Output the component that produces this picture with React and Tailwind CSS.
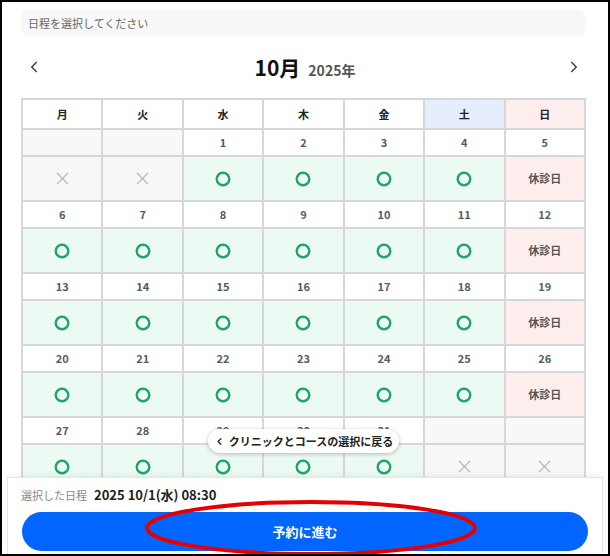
import React from "react";
import { ChevronLeft, ChevronRight } from "lucide-react";

const Circle = () => (
  <svg width="16" height="16" viewBox="0 0 16 16">
    <circle cx="8" cy="8" r="6.3" fill="none" stroke="#1fa56a" strokeWidth="2.4" />
  </svg>
);

const Cross = () => (
  <svg width="13" height="13" viewBox="0 0 13 13">
    <path d="M1 1 L12 12 M12 1 L1 12" stroke="#b9b9be" strokeWidth="1.3" />
  </svg>
);

const weeks = [
  [null, null, 1, 2, 3, 4, 5],
  [6, 7, 8, 9, 10, 11, 12],
  [13, 14, 15, 16, 17, 18, 19],
  [20, 21, 22, 23, 24, 25, 26],
  [27, 28, 29, 30, 31, null, null],
];

const heads = ["月", "火", "水", "木", "金", "土", "日"];

export default function App() {
  return (
    <div className="w-[610px] h-[556px] border-2 border-black bg-white relative overflow-hidden font-['Noto_Sans_CJK_JP',sans-serif]">
      <div className="ml-[19px] w-[565px] pt-[8px]">
        <div className="h-[26px] rounded-lg bg-[#f8f8f9] flex items-center pl-[7px] text-[11px] text-[#666]">
          日程を選択してください
        </div>
        <div className="h-[62px] flex items-center justify-between pl-[4px] pr-[3px]">
          <ChevronLeft size={18} strokeWidth={2.2} color="#444" />
          <div className="flex items-baseline gap-[8px] ml-[2px]">
            <span className="text-[21px] font-bold text-[#111] leading-none">10月</span>
            <span className="text-[14px] font-bold text-[#555] leading-none">2025年</span>
          </div>
          <ChevronRight size={18} strokeWidth={2.2} color="#444" />
        </div>
        <div className="grid grid-cols-7 gap-[2px] bg-[#d6d6db] border-2 border-[#d6d6db]">
          {heads.map((h, i) => (
            <div
              key={h}
              className={`h-[28px] flex items-center justify-center text-[11px] font-bold text-[#222] ${
                i === 5 ? "bg-[#e4eefe]" : i === 6 ? "bg-[#fdeded]" : "bg-white"
              }`}
            >
              {h}
            </div>
          ))}
          {weeks.map((w, wi) => (
            <React.Fragment key={wi}>
              {w.map((d, i) => (
                <div
                  key={"d" + i}
                  className={`h-[25px] flex items-center justify-center text-[11px] font-bold text-[#555b66] ${
                    d === null ? "bg-[#f8f8f9]" : "bg-white"
                  }`}
                >
                  {d}
                </div>
              ))}
              {w.map((d, i) => {
                if (d === null)
                  return (
                    <div key={"s" + i} className="h-[43px] flex items-center justify-center bg-[#f7f7f8]">
                      <Cross />
                    </div>
                  );
                if (i === 6)
                  return (
                    <div
                      key={"s" + i}
                      className="h-[43px] flex items-center justify-center bg-[#fdeded] text-[11px] font-bold text-[#555]"
                    >
                      休診日
                    </div>
                  );
                return (
                  <div key={"s" + i} className="h-[43px] flex items-center justify-center bg-[#ebfaf3]">
                    <Circle />
                  </div>
                );
              })}
            </React.Fragment>
          ))}
        </div>
      </div>

      <div className="absolute left-[206px] top-[427px] h-[24px] w-[191px] rounded-full bg-white shadow-[0_1px_4px_rgba(0,0,0,0.25)] flex items-center justify-center gap-[4px] text-[11px] font-bold text-[#222] whitespace-nowrap">
        <ChevronLeft size={11} strokeWidth={2.8} color="#222" />
        <span>クリニックとコースの選択に戻る</span>
      </div>

      <div className="absolute left-[5px] right-[5px] top-[475px] bottom-0 bg-white border-t border-l border-r border-[#e6e6e8] shadow-[0_-2px_6px_rgba(0,0,0,0.06)] px-[13px]">
        <div className="flex items-center h-[34px] gap-[7px]">
          <span className="text-[11px] text-[#888]">選択した日程</span>
          <span className="text-[13px] font-bold text-[#222]">2025 10/1(水) 08:30</span>
        </div>
        <div className="h-[39px] mx-[1px] rounded-full bg-[#0066ff] flex items-center justify-center text-[13px] font-bold text-white">
          予約に進む
        </div>
      </div>

      <svg className="absolute left-0 top-0 pointer-events-none" width="610" height="556">
        <ellipse cx="309" cy="526" rx="164" ry="26" fill="none" stroke="#e60000" strokeWidth="4" />
      </svg>
    </div>
  );
}
